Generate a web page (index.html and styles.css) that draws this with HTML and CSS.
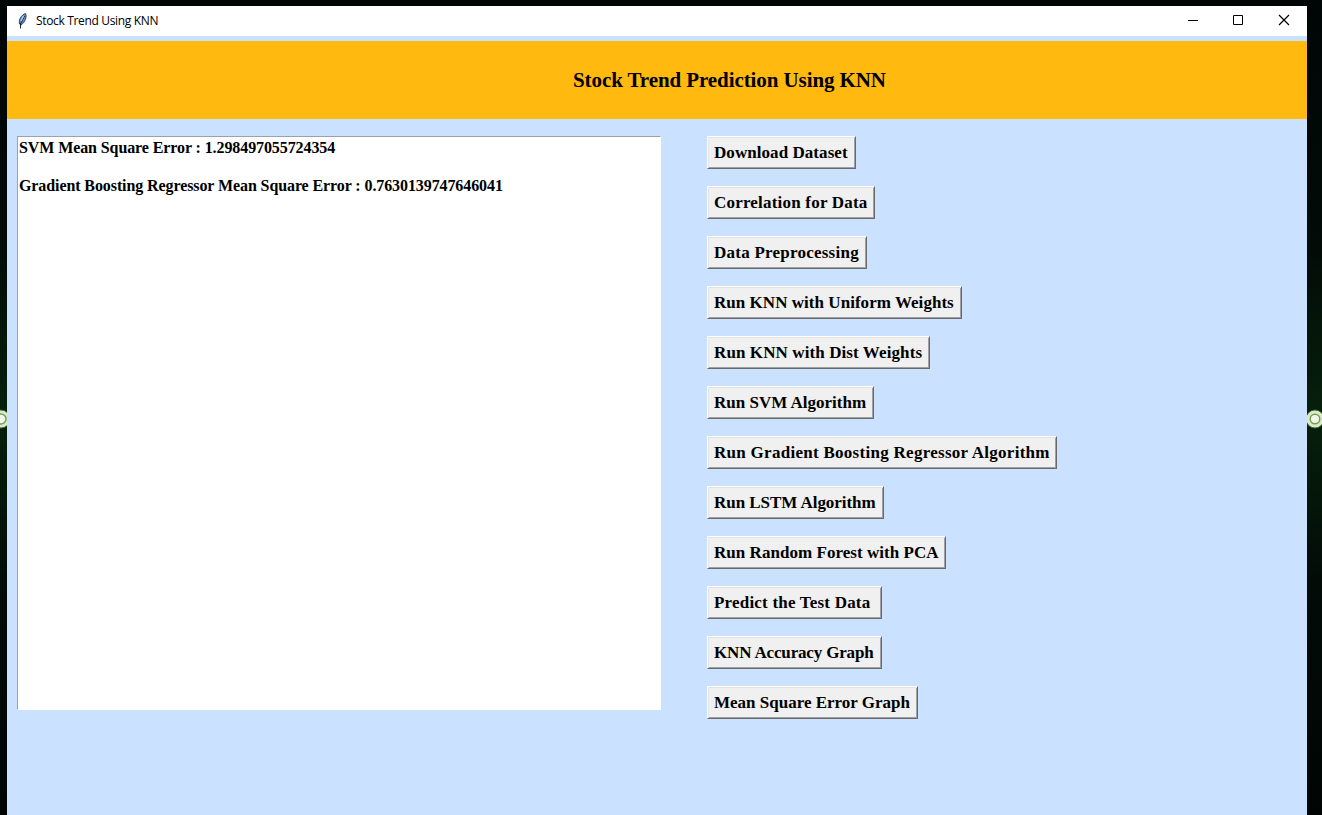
FILE: index.html
```html
<!DOCTYPE html>
<html lang="en">
<head>
<meta charset="utf-8">
<title>Stock Trend Using KNN</title>
<link rel="stylesheet" href="styles.css">
</head>
<body>
<div class="desktop">
  <svg class="wallpaper" width="1322" height="815" viewBox="0 0 1322 815" aria-hidden="true">
    <defs>
      <linearGradient id="night" x1="0" y1="0" x2="0" y2="1">
        <stop offset="0" stop-color="#000606"/><stop offset=".3" stop-color="#020b07"/>
        <stop offset=".51" stop-color="#06200b"/><stop offset=".72" stop-color="#020b07"/>
        <stop offset="1" stop-color="#000504"/>
      </linearGradient>
    </defs>
    <rect width="1322" height="815" fill="url(#night)"/>
    <g class="glow"><circle cx="1" cy="419" r="9"/><circle cx="1315" cy="419" r="9"/></g>
    <g class="ring"><circle cx="1" cy="419" r="5"/><circle cx="1315" cy="419" r="4.8"/></g>
  </svg>
  <main class="window">
    <header class="titlebar">
      <svg class="feather" width="12" height="18" viewBox="0 0 12 18" aria-hidden="true">
        <path d="M2.500 12C1.500 8 4 3 8.500 1.500C10 4 8.500 10 4 13Z" fill="#5b93d6" stroke="#16202c" stroke-width=".8"/>
        <path d="M7.500 4L3.500 12L3.500 16.500" fill="none" stroke="#111" stroke-width=".9"/>
        <path d="M4 9L6.500 4" stroke="#b8d8f8" stroke-width="1.2"/>
      </svg>
      <span class="caption">Stock Trend Using KNN</span>
      <svg class="controls" width="138" height="30" viewBox="0 0 138 30" aria-hidden="true">
        <path d="M19 14.500H29M64.500 9.500H73.500V18.500H64.500Z"/>
        <path class="close" d="M110 9L120 19M120 9L110 19"/>
      </svg>
    </header>
    <h1 class="heading"><span>Stock Trend Prediction Using KNN</span></h1>
    <section class="content">
      <div class="output"><p>SVM Mean Square Error : 1.298497055724354</p><p>Gradient Boosting Regressor Mean Square Error : 0.7630139747646041</p></div>
      <nav class="actions">
        <button style="width:149px;letter-spacing:.06px">Download Dataset</button>
        <button style="width:168px;letter-spacing:.2px">Correlation for Data</button>
        <button style="width:160px;letter-spacing:.24px">Data Preprocessing</button>
        <button style="width:255px;letter-spacing:.04px">Run KNN with Uniform Weights</button>
        <button style="width:223px;letter-spacing:.1px">Run KNN with Dist Weights</button>
        <button style="width:167px">Run SVM Algorithm</button>
        <button style="width:350px;letter-spacing:.28px">Run Gradient Boosting Regressor Algorithm</button>
        <button style="width:177px;letter-spacing:-.05px">Run LSTM Algorithm</button>
        <button style="width:239px;letter-spacing:.04px">Run Random Forest with PCA</button>
        <button style="width:175px;letter-spacing:.2px">Predict the Test Data</button>
        <button style="width:175px;letter-spacing:-.16px">KNN Accuracy Graph</button>
        <button style="width:211px">Mean Square Error Graph</button>
      </nav>
    </section>
  </main>
</div>
</body>
</html>
```
FILE: styles.css
```css
* { box-sizing: border-box; }
body { margin: 0; overflow: hidden; }
.desktop { position: relative; width: 1322px; height: 815px; padding: 6px 15px 0 7px; overflow: hidden; background: #000606; }
.wallpaper { position: absolute; inset: 0; }
.glow { fill: #dcebc6; stroke: #456b35; stroke-width: 1; }
.ring { fill: #f2f7e8; stroke: #72a05c; stroke-width: 1.5; }
.window { position: relative; height: 809px; background: #cae1ff; color: #000; }
.titlebar { display: flex; align-items: center; height: 30px; padding-left: 10px; background: #fff; }
.caption { margin-left: 7px; font: 12px/30px "Open Sans", "Noto Sans", sans-serif; letter-spacing: -.34px; white-space: nowrap; }
.controls { margin-left: auto; fill: none; stroke: #000; stroke-width: 1; }
.close { stroke-width: 1.2; }
.heading { margin: 5px 0 0; height: 78px; padding-left: 566px; background: #ffb90f; font: bold 21px/78px "Liberation Serif", serif; letter-spacing: -.09px; white-space: nowrap; }
.content { display: flex; align-items: flex-start; gap: 46px; padding: 17px 10px 0; }
.output { width: 644px; height: 574px; padding: 1px; border: 1px solid #fff; border-top-color: #a0a0a0; border-left-color: #a0a0a0; background: #fff; font: bold 16px/19px "Liberation Serif", serif; letter-spacing: -.095px; }
.output p { margin: 0 0 19px; width: max-content; white-space: nowrap; }
.actions { display: flex; flex-direction: column; align-items: flex-start; gap: 17px; }
.actions button { height: 33px; margin: 0; padding: 1px 0 0 6px; border: 1px solid; border-color: #fff #696969 #696969 #fff; border-radius: 0; box-shadow: inset 1px 1px #e3e3e3, inset -1px -1px #a0a0a0; background: #f0f0f0; color: #000; text-align: left; font: bold 17px/30px "Liberation Serif", serif; white-space: nowrap; }
```
